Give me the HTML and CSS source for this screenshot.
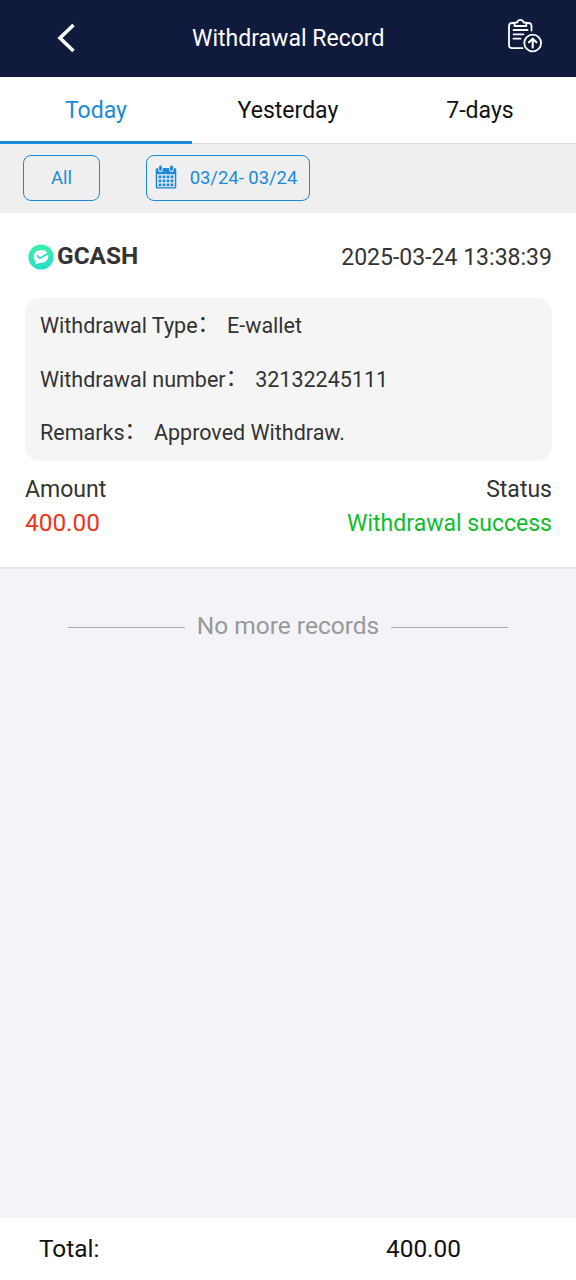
FILE: index.html
```html
<!DOCTYPE html>
<html lang="en">
<head>
<meta charset="utf-8">
<title>Withdrawal Record</title>
<link rel="stylesheet" href="styles.css">
</head>
<body>
<header class="topbar">
  <svg class="back" viewBox="0 0 20 30"><path d="M17.5 2 4 15 17.5 28" fill="none" stroke="#fff" stroke-width="3.6"/></svg>
  <h1 class="title">Withdrawal Record</h1>
  <svg class="export" viewBox="0 0 36 36" fill="none" stroke="#fff" stroke-width="1.8" stroke-linecap="round" stroke-linejoin="round">
    <path d="M15.5 30.2H5Q2 30.2 2 27.2V8Q2 5 5 5H7.5M19.5 5H21.5Q24.5 5 24.5 8V12.5"/>
    <path d="M7.5 8V5.6Q7.5 4.5 8.6 4.5H10.2Q11 1.8 13.4 1.8T16.6 4.5H18.2Q19.3 4.5 19.3 5.6V8Z"/>
    <path d="M6.5 12H20.5M6.5 16.3H16.5M6.5 20.7H13.5"/>
    <circle cx="25.7" cy="25" r="8.4"/>
    <path d="M25.7 29.5V21M22 24.3 25.7 20.7 29.4 24.3" stroke-width="2.1"/>
  </svg>
</header>
<nav class="tabs">
  <a class="tab active">Today</a>
  <a class="tab">Yesterday</a>
  <a class="tab">7-days</a>
</nav>
<section class="filters">
  <div class="chip all">All</div>
  <div class="chip dates">
    <svg class="calendar" viewBox="0 0 22 24">
      <path d="M0.7 5Q0.7 3 2.7 3H19.3Q21.3 3 21.3 5V22Q21.3 23.6 19.7 23.6H2.3Q0.7 23.6 0.7 22Z" fill="#1b8ad8"/>
      <path d="M5.5 2V4.8M16.5 2V4.8" stroke="#efefef" stroke-width="4.6" stroke-linecap="round"/>
      <path d="M5.5 1.8V4.6M16.5 1.8V4.6" stroke="#1b8ad8" stroke-width="2.8" stroke-linecap="round"/>
      <path d="M2.2 9.2H19.8V22.2H2.2Z" fill="#efefef"/>
      <path d="M3.6 11.8H18.6M3.6 15.8H18.6M3.6 19.8H18.6" stroke="#1b8ad8" stroke-width="2.8" stroke-dasharray="2.8 1.2"/>
    </svg>
    <span>03/24- 03/24</span>
  </div>
</section>
<article class="record">
  <div class="record-head">
    <svg class="wallet" viewBox="0 0 26 26">
      <defs><linearGradient id="mint" x1="0" y1="0" x2="0" y2="1"><stop offset="0" stop-color="#3af0a6"/><stop offset="1" stop-color="#22dfc5"/></linearGradient></defs>
      <circle cx="13" cy="13" r="12.6" fill="url(#mint)"/>
      <path d="M12.5 6C17.5 5.5 20.5 8.5 20.3 12.5C20 17 16 19.2 12.5 18.8L7.2 20.4L7.6 17.2C3.5 13.5 6 6.7 12.5 6Z" fill="#fff"/>
      <path d="M8.8 11.3 11.7 14.2 20.5 9.2" fill="none" stroke="#29e6ba" stroke-width="1.7"/>
    </svg>
    <strong class="method">GCASH</strong>
    <time class="time">2025-03-24 13:38:39</time>
  </div>
  <div class="details">
    <div class="line"><span class="label">Withdrawal Type<span class="colon">：</span></span><span>E-wallet</span></div>
    <div class="line"><span class="label">Withdrawal number<span class="colon">：</span></span><span>32132245111</span></div>
    <div class="line"><span class="label">Remarks<span class="colon">：</span></span><span>Approved Withdraw.</span></div>
  </div>
  <div class="summary"><span>Amount</span><span>Status</span></div>
  <div class="summary values"><span class="amount">400.00</span><span class="success">Withdrawal success</span></div>
</article>
<div class="end">No more records</div>
<footer class="total"><span class="total-label">Total:</span><span class="total-value">400.00</span></footer>
</body>
</html>
```
FILE: styles.css
```css
* { box-sizing: border-box; }
body {
  margin: 0;
  height: 1280px;
  display: flex;
  flex-direction: column;
  background: #f3f3f8;
  color: #333;
  font-family: Roboto, "Noto Sans CJK SC", sans-serif;
  font-size: 23.04px;
}
.topbar {
  height: 77px;
  display: grid;
  grid-template-columns: 192px 192px 192px;
  align-items: center;
  background: #101a3c;
  color: #fff;
}
.back { width: 20px; height: 30px; margin: 0 0 2px 56px; }
.title { margin: 0; font-size: 23.04px; font-weight: 400; text-align: center; white-space: nowrap; }
.export { width: 36px; height: 36px; justify-self: end; margin: 0 33px 6px 0; }
.tabs { height: 67px; display: flex; background: #fff; border-bottom: 1px solid #ddd; color: #111; }
.tab { flex: 1; height: 67px; line-height: 67px; text-align: center; }
.active { color: #1b8ad8; border-bottom: 3px solid #1b8ad8; }
.filters { height: 69px; padding: 11px 23px; display: flex; gap: 46px; background: #efefef; }
.chip {
  height: 46px;
  display: flex;
  align-items: center;
  justify-content: center;
  padding-bottom: 2px;
  border: 1px solid #1b8ad8;
  border-radius: 8px;
  color: #1b8ad8;
  font-size: 18.43px;
}
.all { width: 77px; }
.dates { width: 164px; gap: 13px; padding-right: 4px; }
.calendar { width: 22px; height: 24px; }
.record { height: 356px; padding: 25px 24px 0 25px; background: #fff; border-bottom: 2px solid #e5e5e8; }
.record-head { height: 38px; display: flex; align-items: center; }
.wallet { width: 26px; height: 26px; margin: 0 3px 0 3px; }
.method { margin-bottom: 3px; font-weight: 700; font-size: 24.4px; }
.time { margin-left: auto; }
.details {
  height: 163px;
  margin-top: 22px;
  padding: 1px 15px 0;
  border-radius: 15px;
  background: #f5f5f5;
  font-size: 21.5px;
}
.line { height: 53.6px; display: flex; align-items: baseline; line-height: 53.6px; }
.label { margin-right: 8px; }
.colon { line-height: 1; vertical-align: 2px; }
.summary { height: 34px; margin-top: 11px; display: flex; align-items: center; justify-content: space-between; }
.values { margin-top: 0; }
.amount { margin-bottom: 2px; color: #e8371d; font-size: 24.4px; }
.success { color: #0fbd2b; }
.end {
  margin: 42px 68px 0;
  display: flex;
  align-items: center;
  gap: 12px;
  line-height: 30px;
  color: #999;
  font-size: 24.5px;
}
.end::before, .end::after { content: ""; flex: 1; height: 1px; margin-top: 2px; background: #aaa; }
.total { height: 62px; margin-top: auto; padding: 0 0 2px 39px; display: flex; align-items: center; background: #fff; color: #111; font-size: 24.4px; }
.total-label { width: 347px; }
```
